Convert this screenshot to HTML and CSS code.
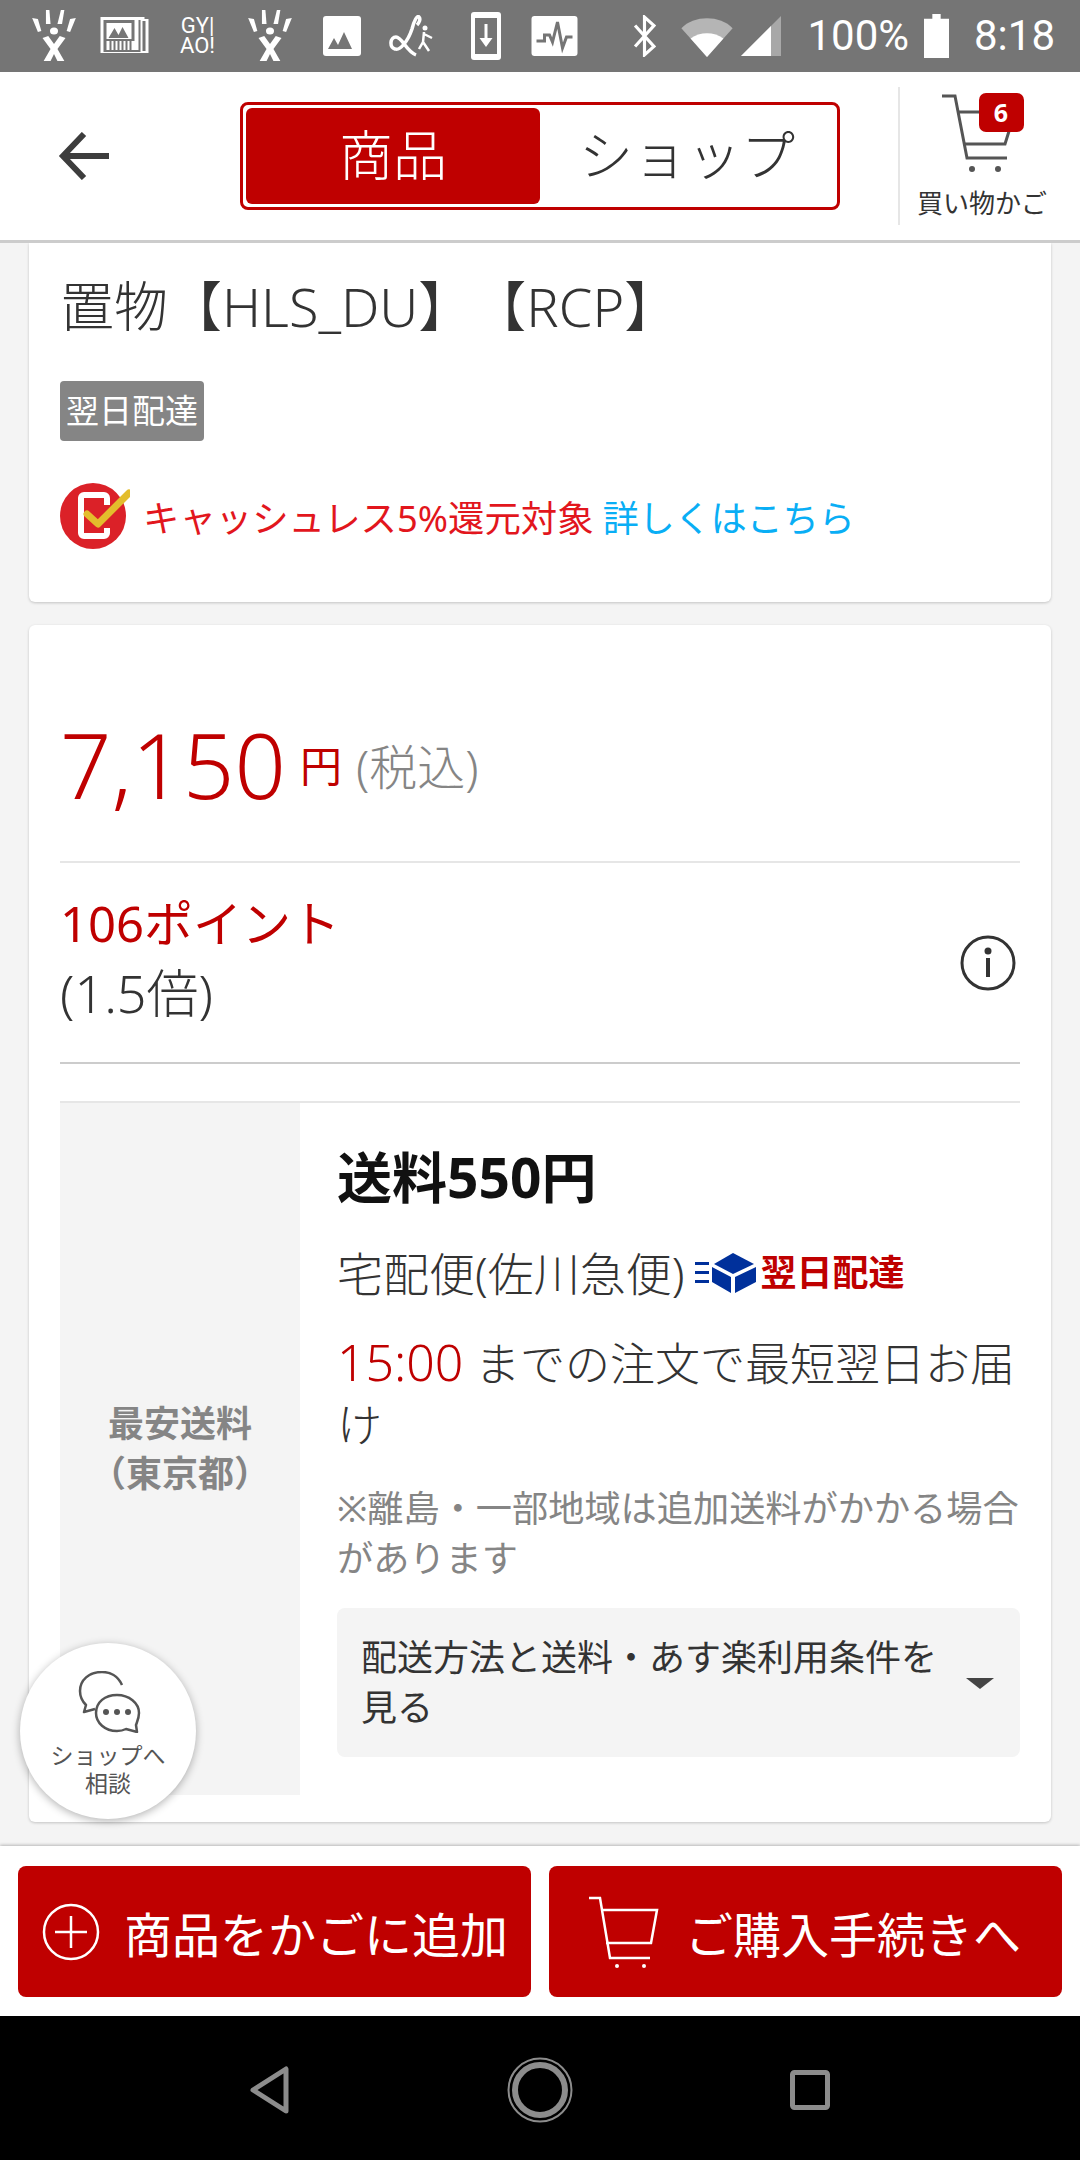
FILE: index.html
```html
<!DOCTYPE html>
<html lang="ja">
<head>
    <meta charset="UTF-8">
    <meta name="viewport" content="width=device-width, initial-scale=1.0">
    <title>商品</title>
    <link rel="stylesheet" href="styles.css">
</head>
<body>
<div class="page">
    <div class="status-bar">
        <div class="status-left">
            <svg class="st-tight" width="46" height="52" viewBox="0 0 40 52" preserveAspectRatio="none"><g fill="#fff"><path d="M1 8l5 1 3 12-3 1z"/><path d="M13 0l3 0 1 14-4 0z"/><path d="M26 0l3 0-2 14-4 0z"/><path d="M39 8l-5 1-3 12 3 1z"/><circle cx="20" cy="21" r="3.500"/><path d="M10 28l5-2 5 8 5-8 5 2-7 11 6 12h-6l-3-7-3 7h-6l6-12z"/></g></svg>
            <svg width="51" height="38" viewBox="0 0 50 38"><path fill="#fff" d="M0 0h44v2h4v34h-48z"/><path fill="#757575" d="M3 3h37v32h-37zM42 4h3v30h-3z"/><path fill="#fff" d="M6 6h25v16h-25zM6 24h3v9h-3zM11 24h2v9h-2zM15 24h2v9h-2zM19 24h2v9h-2zM23 24h2v9h-2zM27 24h2v9h-2zM31 24h3v9h-3zM34 3h4v30h-4z"/><path fill="#757575" d="M8 21l6-10 4 7 4-8 6 11z"/></svg>
            <span class="st-gyao">GY|<br>AO!</span>
            <svg class="st-loose" width="46" height="52" viewBox="0 0 40 52" preserveAspectRatio="none"><g fill="#fff"><path d="M1 8l5 1 3 12-3 1z"/><path d="M13 0l3 0 1 14-4 0z"/><path d="M26 0l3 0-2 14-4 0z"/><path d="M39 8l-5 1-3 12 3 1z"/><circle cx="20" cy="21" r="3.500"/><path d="M10 28l5-2 5 8 5-8 5 2-7 11 6 12h-6l-3-7-3 7h-6l6-12z"/></g></svg>
            <svg class="st-loose" width="38" height="40" viewBox="0 0 38 40"><rect width="38" height="40" rx="3" fill="#fff"/><path fill="#757575" d="M5 33l6-11 4 7 6-13 8 17z"/></svg>
            <svg width="46" height="42" viewBox="0 0 46 42"><path fill="none" stroke="#fff" stroke-width="3.500" d="M24 14C20 26 12 36 7 34 1 32 2 22 8 22c6 0 10 14 20 18M24 14C26 6 29 0 31 2c2 2 0 6-2 8"/><circle cx="37" cy="13" r="2.500" fill="#fff"/><path fill="none" stroke="#fff" stroke-width="2.500" d="M36 17l-1 10-4 7M36 19l8 4M35 27l6 9"/></svg>
            <svg class="st-wide" width="30" height="48" viewBox="0 0 30 48"><rect width="30" height="48" rx="3" fill="#fff"/><rect x="4" y="6" width="22" height="36" fill="#757575"/><path fill="#fff" d="M13.500 12h3v14h5l-6.500 9-6.500-9h5z"/></svg>
            <svg class="st-loose" width="47" height="40" viewBox="0 0 46 40"><rect width="46" height="40" rx="3" fill="#fff"/><path fill="none" stroke="#757575" stroke-width="3" d="M5 25h8v-6h5l3 7 5-20 5 26 4-11h6"/></svg>
        </div>
        <div class="status-right">
            <svg width="27" height="42" viewBox="0 0 24 40"><path fill="none" stroke="#fff" stroke-width="3" d="M3 10l18 20-9 8V2l9 8-18 20"/></svg>
            <svg class="st-wifi" width="52" height="41" viewBox="0 0 50 40"><path fill="#b5b5b5" d="M0 12C12-1 38-1 50 12L25 40z"/><path fill="#fff" d="M9 22c9-7 23-7 32 0L25 40z"/></svg>
            <svg width="40" height="40" viewBox="0 0 40 40"><path fill="#a8a8a8" d="M40 0v40H0z"/><path fill="#fff" d="M30 10v30H0z"/></svg>
            <span class="st-text st-batt">100%</span>
            <svg class="st-battery" width="25" height="44" viewBox="0 0 24 46" preserveAspectRatio="none"><path fill="#fff" d="M8 0h8v5h8v41H0V5h8z"/></svg>
            <span class="st-text st-time">8:18</span>
        </div>
    </div>

    <header class="top-bar">
        <button class="back-btn" aria-label="戻る">
            <svg width="52" height="48" viewBox="0 0 52 48"><path fill="none" stroke="#3d3d3d" stroke-width="6" d="M26 2L5 24l21 22M5 24h46"/></svg>
        </button>
        <div class="segment">
            <div class="segment-item active">商品</div>
            <div class="segment-item">ショップ</div>
        </div>
        <div class="cart-link">
            <div class="cart-icon">
                <svg width="81" height="84" viewBox="0 0 81 84"><g fill="none" stroke="#555" stroke-width="3"><path d="M0 3h13l12 62h40"/><path d="M15 19h25M23 51h40l5-16"/></g><circle cx="30" cy="76" r="3" fill="#555"/><circle cx="56" cy="76" r="3" fill="#555"/></svg>
                <span class="cart-badge">6</span>
            </div>
            <div class="cart-label">買い物かご</div>
        </div>
    </header>

    <main class="content">
        <section class="card card-title">
            <h1 class="item-name">置物【HLS_DU】【RCP】</h1>
            <span class="tag">翌日配達</span>
            <div class="cashless">
                <svg width="70" height="66" viewBox="0 0 70 66"><circle cx="33" cy="33" r="33" fill="#db2128"/><path fill="none" stroke="#fff" stroke-width="6" d="M47 22V15a3 3 0 0 0-3-3H24a3 3 0 0 0-3 3v35a3 3 0 0 0 3 3h20a3 3 0 0 0 3-3v-5"/><path fill="none" stroke="#e3bd2c" stroke-width="7" stroke-linecap="round" stroke-linejoin="round" d="M27 31l11 10 31-31"/></svg>
                <span class="cashless-text">キャッシュレス5%還元対象</span>
                <span class="cashless-link">詳しくはこちら</span>
            </div>
        </section>

        <section class="card card-price">
            <div class="price-row">
                <span class="price">7,150</span>
                <span class="yen">円</span>
                <span class="tax">(税込)</span>
            </div>
            <div class="point-row">
                <div>
                    <div class="point">106ポイント</div>
                    <div class="point-rate">(1.5倍)</div>
                </div>
                <svg width="56" height="56" viewBox="0 0 56 56"><circle cx="28" cy="28" r="26" fill="none" stroke="#333" stroke-width="3"/><circle cx="28" cy="16" r="3.500" fill="#333"/><rect x="26" y="23" width="4" height="19" fill="#333"/></svg>
            </div>
            <div class="ship">
                <div class="ship-label">最安送料<br>（東京都）</div>
                <div class="ship-body">
                    <div class="ship-fee">送料550円</div>
                    <div class="ship-method">
                        <span>宅配便(佐川急便)</span>
                        <svg width="62" height="40" viewBox="0 0 62 40"><g fill="#00309b"><path d="M0 9h14v3H0zM0 18h14v3H0zM0 27h14v3H0z"/><path d="M38 0l21 11-21 10-19-10z"/><path d="M17 14l19 10v16L17 29zM61 14v15l-21 11V24z"/></g></svg>
                        <span class="ship-next">翌日配達</span>
                    </div>
                    <div class="ship-time"><span class="ship-hour">15:00</span> までの注文で最短翌日お届け</div>
                    <div class="ship-note">※離島・一部地域は追加送料がかかる場合があります</div>
                    <div class="ship-more">
                        <span>配送方法と送料・あす楽利用条件を見る</span>
                        <i class="caret"></i>
                    </div>
                </div>
            </div>
        </section>

        <div class="chat-fab">
            <svg width="66" height="62" viewBox="0 0 66 62"><g fill="none" stroke="#555" stroke-width="2.500" stroke-linejoin="round"><path d="M44 14C40 5 32 1 24 1 11 1 2 9 2 20c0 6 3 11 6 14l-2 7 11-3"/><path d="M18 42c0-11 9-18 21-18s22 8 22 18c0 5-2 9-3 12l1 7-11-3c-2 1-5 2-9 2-12 0-21-8-21-18z"/></g><g fill="#555"><circle cx="28" cy="41" r="3"/><circle cx="39" cy="41" r="3"/><circle cx="50" cy="41" r="3"/></g></svg>
            <div class="chat-label">ショップへ<br>相談</div>
        </div>
    </main>

    <div class="action-bar">
        <button class="action-btn">
            <svg width="58" height="58" viewBox="0 0 58 58"><circle cx="29" cy="29" r="27" fill="none" stroke="#fff" stroke-width="2.500"/><path stroke="#fff" stroke-width="2.500" d="M13 29h32M29 13v32"/></svg>
            <span>商品をかごに追加</span>
        </button>
        <button class="action-btn action-buy">
            <svg width="72" height="72" viewBox="0 0 72 72"><g fill="none" stroke="#fff" stroke-width="2.500"><path d="M0 2h11l10 60h40"/><path d="M12 14h56l-6 33H17"/></g><circle cx="28" cy="70" r="2" fill="#fff"/><circle cx="55" cy="70" r="2" fill="#fff"/></svg>
            <span>ご購入手続きへ</span>
        </button>
    </div>

    <nav class="nav-bar">
        <svg width="40" height="48" viewBox="0 0 40 48"><path fill="none" stroke="#8c8c8c" stroke-width="5" stroke-linejoin="round" d="M36 3v42L3 24z"/></svg>
        <svg width="66" height="66" viewBox="0 0 66 66"><circle cx="33" cy="33" r="31.500" fill="none" stroke="#8c8c8c" stroke-width="2"/><circle cx="33" cy="33" r="25" fill="none" stroke="#8c8c8c" stroke-width="6"/></svg>
        <svg width="40" height="40" viewBox="0 0 40 40"><rect x="2.500" y="2.500" width="35" height="35" rx="2" fill="none" stroke="#8c8c8c" stroke-width="5"/></svg>
    </nav>
</div>
</body>
</html>
```

FILE: styles.css
```css
* {
    box-sizing: border-box;
}

body {
    margin: 0;
    font-family: "Noto Sans", "Noto Sans CJK JP", sans-serif;
    background-color: #f4f4f4;
    color: #333;
    text-spacing-trim: space-all;
}

button {
    border: none;
    background: none;
    padding: 0;
    font-family: inherit;
    cursor: pointer;
}

.page {
    display: flex;
    flex-direction: column;
    width: 1080px;
    height: 2160px;
    overflow: hidden;
}

/* status bar */
.status-bar {
    display: flex;
    justify-content: space-between;
    align-items: center;
    height: 72px;
    flex-shrink: 0;
    padding: 0 25px 0 31px;
    background-color: #757575;
    color: #fff;
}

.status-left,
.status-right {
    display: flex;
    align-items: center;
}

.status-left {
    gap: 27px;
}

.status-right {
    gap: 8px;
}

.st-tight {
    margin-right: -4px;
}

.st-loose {
    margin-left: 3px;
}

.st-wide {
    margin-left: 10px;
}

.st-gyao {
    width: 39px;
    font-family: "Roboto", sans-serif;
    font-size: 22px;
    line-height: 20px;
    text-align: center;
}

.st-wifi {
    margin-left: 15px;
}

.st-text {
    font-family: "Roboto", sans-serif;
    font-size: 42px;
    line-height: 48px;
}

.st-batt {
    margin-left: 18px;
}

.st-battery {
    margin-left: 7px;
}

.st-time {
    margin-left: 17px;
}

/* header */
.top-bar {
    display: flex;
    align-items: center;
    height: 171px;
    flex-shrink: 0;
    background-color: #fff;
    border-bottom: 3px solid #ccc;
}

.back-btn {
    display: flex;
    width: 240px;
    padding-left: 58px;
}

.segment {
    display: flex;
    width: 600px;
    height: 108px;
    padding: 3px;
    border: 3px solid #bf0000;
    border-radius: 8px;
}

.segment-item {
    display: flex;
    flex: 1;
    align-items: center;
    justify-content: center;
    padding-bottom: 7px;
    font-size: 54px;
    font-weight: 300;
    color: #333;
}

.segment-item.active {
    flex: none;
    width: 294px;
    border-radius: 6px;
    background-color: #bf0000;
    color: #fff;
}

.cart-link {
    display: flex;
    flex-direction: column;
    align-items: center;
    width: 166px;
    height: 138px;
    margin-left: 58px;
    border-left: 2px solid #e6e6e6;
}

.cart-icon {
    position: relative;
    width: 81px;
    height: 84px;
    margin-top: 6px;
}

.cart-badge {
    position: absolute;
    top: 0;
    left: 37px;
    width: 45px;
    height: 39px;
    border-radius: 7px;
    background-color: #bf0000;
    color: #fff;
    font-size: 25px;
    font-weight: 700;
    line-height: 38px;
    text-align: center;
}

.cart-label {
    margin-top: 7px;
    font-size: 26px;
    line-height: 38px;
    white-space: nowrap;
    color: #333;
}

/* content */
.content {
    position: relative;
    flex: 1;
    overflow: hidden;
    padding: 0 29px;
}

.card {
    border-radius: 0 0 6px 6px;
    background-color: #fff;
    box-shadow: 0 1px 3px rgba(0, 0, 0, 0.2);
}

.card-title {
    height: 359px;
    padding: 29px 31px 0;
}

.item-name {
    margin: 0;
    font-size: 54px;
    font-weight: 300;
    line-height: 68px;
    color: #333;
}

.tag {
    display: inline-block;
    margin-top: 41px;
    padding: 0 6px;
    border-radius: 4px;
    background-color: #858585;
    color: #fff;
    font-size: 33px;
    line-height: 60px;
}

.cashless {
    display: flex;
    align-items: center;
    margin-top: 42px;
    font-size: 36.400px;
    white-space: nowrap;
}

.cashless-text {
    margin-left: 13px;
    color: #e2161d;
}

.cashless-link {
    margin-left: 9px;
    font-size: 36px;
    color: #09aef5;
}

.card-price {
    height: 1197px;
    margin-top: 23px;
    padding: 0 31px;
    border-radius: 6px;
}

.price-row {
    display: flex;
    align-items: center;
    height: 238px;
    padding-top: 41px;
    border-bottom: 2px solid #e6e6e6;
}

.price {
    font-family: "Noto Sans", sans-serif;
    font-size: 90px;
    font-weight: 300;
    line-height: 110px;
    color: #bf0000;
}

.yen {
    margin-left: 14px;
    font-size: 42px;
    color: #bf0000;
}

.tax {
    margin-left: 14px;
    font-size: 48px;
    font-weight: 300;
    color: #858585;
}

.point-row {
    display: flex;
    justify-content: space-between;
    align-items: center;
    height: 201px;
    padding: 0 4px 0 0;
    border-bottom: 2px solid #ccc;
}

.point-row > div {
    margin-bottom: 10px;
}

.point {
    font-size: 49px;
    line-height: 69px;
    color: #bf0000;
}

.point-rate {
    font-size: 52px;
    line-height: 69px;
    font-weight: 300;
    color: #333;
}

.ship {
    display: flex;
    height: 694px;
    margin-top: 37px;
    border-top: 2px solid #e6e6e6;
}

.ship-label {
    display: flex;
    align-items: center;
    justify-content: center;
    width: 240px;
    flex-shrink: 0;
    background-color: #f4f4f4;
    color: #858585;
    font-size: 36px;
    font-weight: 700;
    line-height: 50px;
    text-align: center;
}

.ship-body {
    flex: 1;
    min-width: 0;
    padding: 40px 0 0 37px;
}

.ship-fee {
    font-size: 55px;
    font-weight: 700;
    line-height: 68px;
    color: #111;
}

.ship-method {
    display: flex;
    align-items: center;
    gap: 10px;
    margin-top: 32px;
    font-size: 46px;
    font-weight: 300;
    line-height: 60px;
    white-space: nowrap;
}

.ship-next {
    margin-left: -6px;
    color: #bf0000;
    font-size: 36px;
    font-weight: 700;
}

.ship-time {
    margin-top: 30px;
    font-size: 45px;
    font-weight: 300;
    line-height: 61px;
}

.ship-hour {
    color: #bf0000;
    font-size: 50px;
    line-height: 50px;
}

.ship-note {
    margin-top: 28px;
    font-size: 36.200px;
    line-height: 50px;
    color: #858585;
}

.ship-more {
    display: flex;
    align-items: center;
    justify-content: space-between;
    height: 149px;
    margin-top: 25px;
    padding: 0 26px 0 24px;
    border-radius: 8px;
    background-color: #f4f4f4;
    font-size: 36px;
    line-height: 50px;
}

.ship-more span {
    width: 590px;
}

.caret {
    width: 0;
    height: 0;
    margin-top: 2px;
    border-left: 14px solid transparent;
    border-right: 14px solid transparent;
    border-top: 11px solid #444;
}

.chat-fab {
    position: absolute;
    left: 20px;
    top: 1400px;
    display: flex;
    flex-direction: column;
    align-items: center;
    width: 176px;
    height: 176px;
    padding-top: 28px;
    border-radius: 50%;
    background-color: #fff;
    box-shadow: 0 2px 8px rgba(0, 0, 0, 0.3);
}

.chat-fab svg {
    margin-left: 6px;
}

.chat-label {
    margin-top: 8px;
    font-size: 23px;
    line-height: 28px;
    text-align: center;
    color: #555;
}

/* bottom */
.action-bar {
    display: flex;
    justify-content: space-between;
    height: 170px;
    flex-shrink: 0;
    padding: 20px 18px 0;
    background-color: #fff;
    box-shadow: 0 -1px 3px rgba(0, 0, 0, 0.25);
}

.action-btn {
    display: flex;
    align-items: center;
    gap: 24px;
    width: 513px;
    height: 131px;
    padding-left: 24px;
    border-radius: 8px;
    background-color: #bf0000;
    color: #fff;
    font-size: 48px;
    white-space: nowrap;
}

.action-buy {
    gap: 24px;
    padding-left: 40px;
}

.nav-bar {
    display: flex;
    justify-content: center;
    align-items: center;
    gap: 217px;
    height: 144px;
    flex-shrink: 0;
    padding-top: 4px;
    background-color: #000;
}
```
